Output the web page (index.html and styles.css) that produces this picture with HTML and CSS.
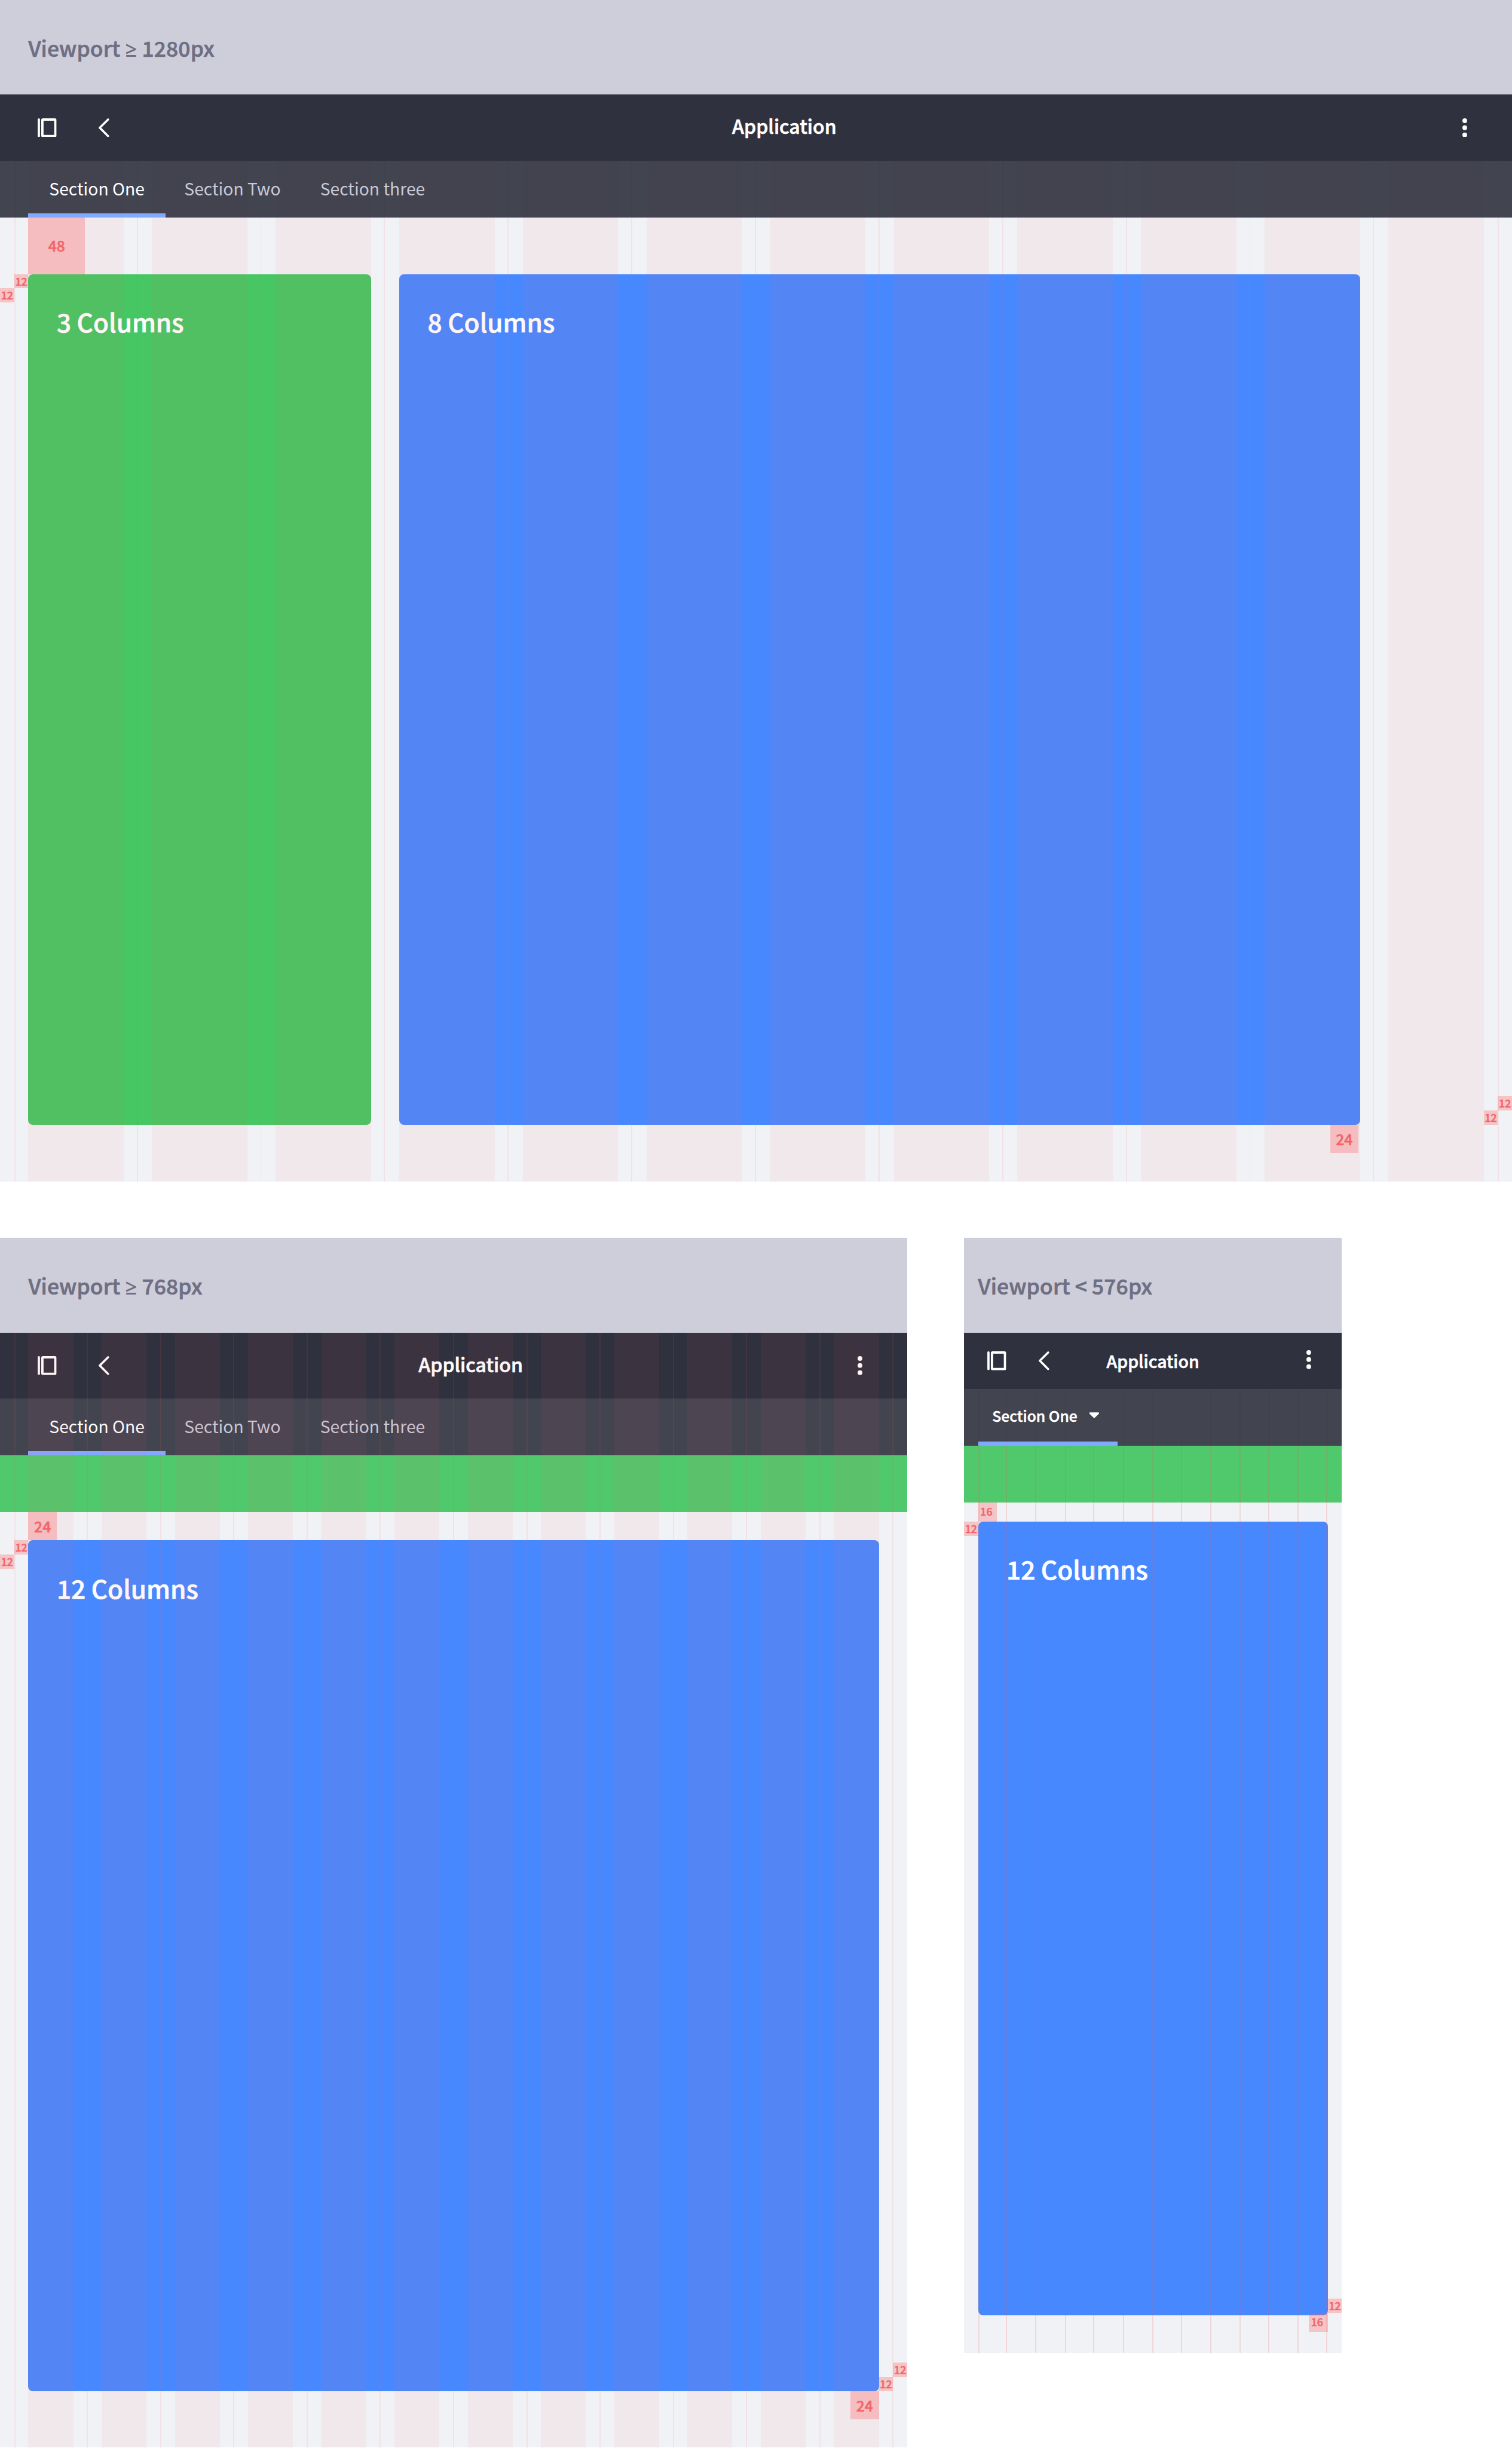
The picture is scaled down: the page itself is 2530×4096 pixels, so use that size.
FILE: index.html
```html
<!DOCTYPE html>
<html lang="en">
<head>
<meta charset="utf-8">
<title>Responsive grid</title>
<link rel="stylesheet" href="styles.css">
</head>
<body>
<svg width="0" height="0" class="defs" aria-hidden="true">
  <symbol id="i-panel" viewBox="0 0 32 32"><path d="M2 2v28" fill="none" stroke="#fff" stroke-width="3.8" stroke-linecap="round"/><rect x="8" y="2" width="22" height="28" rx="1" fill="none" stroke="#fff" stroke-width="4"/></symbol>
  <symbol id="i-back" viewBox="0 0 20 32"><path d="M17 2L3 16L17 30" fill="none" stroke="#fff" stroke-width="3.6" stroke-linecap="round" stroke-linejoin="round"/></symbol>
  <symbol id="i-more" viewBox="0 0 8 32"><circle cx="4" cy="4" r="4" fill="#fff"/><circle cx="4" cy="16" r="4" fill="#fff"/><circle cx="4" cy="28" r="4" fill="#fff"/></symbol>
</svg>
<main class="board">
  <section class="viewport large">
    <h2 class="label">Viewport <span class="op">≥</span> 1280px</h2>
    <div class="screen">
      <div class="guides"><i></i><i></i><i></i><i></i><i></i><i></i><i></i><i></i><i></i><i></i><i></i><i></i></div>
      <header class="nav">
        <svg class="panel"><use href="#i-panel"/></svg><svg class="back"><use href="#i-back"/></svg>
        <h1 class="title">Application</h1>
        <svg class="more"><use href="#i-more"/></svg>
      </header>
      <nav class="tabs"><a class="tab active">Section One</a><a class="tab two">Section Two</a><a class="tab">Section three</a></nav>
      <div class="body">
        <article class="card green"><h3>3 Columns</h3><b class="s m12 in-top">12</b><b class="s m12 out-top">12</b><b class="s m48 above">48</b></article>
        <article class="card blue"><h3>8 Columns</h3><b class="s m24 below">24</b></article>
      </div>
      <b class="s m12 edge-a">12</b><b class="s m12 edge-b">12</b>
    </div>
  </section>
  <div class="pair">
    <section class="viewport medium">
      <h2 class="label">Viewport <span class="op">≥</span> 768px</h2>
      <div class="screen">
        <header class="nav">
          <svg class="panel"><use href="#i-panel"/></svg><svg class="back"><use href="#i-back"/></svg>
          <h1 class="title">Application</h1>
          <svg class="more"><use href="#i-more"/></svg>
        </header>
        <nav class="tabs"><a class="tab active">Section One</a><a class="tab two">Section Two</a><a class="tab">Section three</a></nav>
        <div class="band"></div>
        <div class="body">
          <article class="card blue"><h3>12 Columns</h3><b class="s m12 in-top">12</b><b class="s m12 out-top">12</b><b class="s m24 above">24</b><b class="s m12 in-bottom">12</b><b class="s m12 out-bottom">12</b><b class="s m24 below">24</b></article>
        </div>
        <div class="guides"><i></i><i></i><i></i><i></i><i></i><i></i><i></i><i></i><i></i><i></i><i></i><i></i></div>
      </div>
    </section>
    <section class="viewport small">
      <h2 class="label">Viewport &lt; 576px</h2>
      <div class="screen">
        <header class="nav">
          <svg class="panel"><use href="#i-panel"/></svg><svg class="back"><use href="#i-back"/></svg>
          <h1 class="title">Application</h1>
          <svg class="more"><use href="#i-more"/></svg>
        </header>
        <nav class="tabs"><a class="tab active">Section One<svg class="caret" viewBox="0 0 20 12"><path d="M3 2.5H17L10 9.5Z" fill="#fff" stroke="#fff" stroke-width="2.6" stroke-linejoin="round"/></svg></a></nav>
        <div class="band"></div>
        <div class="body">
          <article class="card blue"><h3>12 Columns</h3><b class="s m12 in-top">12</b><b class="s m16 above">16</b><b class="s m12 in-bottom">12</b><b class="s m16 below">16</b></article>
        </div>
        <div class="guides"><i></i><i></i><i></i><i></i><i></i><i></i><i></i><i></i><i></i><i></i><i></i><i></i></div>
      </div>
    </section>
  </div>
</main>
</body>
</html>
```
FILE: styles.css
```css
/* 1rem is ten design pixels at the board's scale */
html { font-size: 9.8828125px; }
* { box-sizing: border-box; }
body { margin: 0; background: #fff; overflow: hidden; font-family: "Noto Sans CJK SC", "Noto Sans", sans-serif; }
h1, h2, h3 { margin: 0; font-weight: 500; white-space: nowrap; -webkit-text-stroke: .07rem currentColor; }
svg { display: block; flex: none; }
.defs { position: absolute; }
.board { width: 256rem; height: 414.4rem; display: flex; flex-direction: column; gap: 9.6rem; }
.pair { display: flex; gap: 9.6rem; align-items: flex-start; }
.viewport { display: flex; flex-direction: column; }
.large { width: 256rem; height: 200rem; }
.medium { width: 153.6rem; height: 204.8rem; }
.small { width: 64rem; height: 188.8rem; }
.label { height: 16rem; padding: 0 4.8rem; background: #cecdda; color: #6e6f82; font-size: 3.58rem; line-height: 16.2rem; letter-spacing: .012rem; }
.small .label { padding: 0 2.4rem; }
.op { font-family: "Open Sans", "Noto Sans", sans-serif; font-weight: 600; font-size: 3.5rem; line-height: 1; -webkit-text-stroke: 0; }
.screen { position: relative; flex: 1; display: flex; flex-direction: column; background: #f0f2f5; }

.nav { height: 11.2rem; padding: 0 7.6rem 0 6.4rem; display: flex; align-items: center; background: #2f313e; color: #fff; position: relative; }
.panel { width: 3.2rem; height: 3.2rem; }
.back { width: 2rem; height: 3.2rem; margin-left: 7rem; }
.more { width: .8rem; height: 3.2rem; margin-left: auto; }
.title { position: absolute; left: 9.6rem; right: 0; top: 0; text-align: center; font-size: 3.24rem; line-height: 10.6rem; }
.medium .title { left: 5.8rem; }
.small .title { left: 0; font-size: 2.88rem; line-height: 9.5rem; }
.small .nav { height: 9.6rem; padding: 0 5.2rem 0 4rem; }
.small .back { margin-left: 5.4rem; }
.small .more { margin-bottom: .4rem; }

.tabs { height: 9.6rem; padding-left: 4.8rem; display: flex; background: rgba(47, 49, 62, .9); position: relative; color: #c9c9d8; font-size: 2.86rem; line-height: 9.4rem; }
.tab { padding: 0 3.1rem; white-space: nowrap; }
.tab.two { padding: 0 3.6rem 0 3.2rem; }
.tab.active { width: 23.2rem; padding: 0; text-align: center; color: #fff; border-bottom: .8rem solid #80aaff; }
.small .tabs { padding-left: 2.4rem; font-weight: 500; font-size: 2.5rem; line-height: 9.2rem; -webkit-text-stroke: .05rem currentColor; }
.small .tab.active { width: 23.6rem; padding-left: 2.4rem; display: flex; align-items: center; gap: 1.8rem; }
.caret { width: 2rem; height: 1.2rem; }

.band { height: 9.6rem; background: #50c86c; }
.body { flex: 1; display: flex; gap: 4.8rem; padding: 9.6rem 4.8rem; position: relative; }
.medium .body { padding: 4.8rem 4.8rem 9.6rem; }
.small .body { padding: 3.2rem 2.4rem 6.4rem; }
.card { position: relative; flex: 1; padding: 4.8rem; border-radius: .8rem; color: #fff; }
.card h3 { font-size: 4.29rem; line-height: 6.4rem; }
.large .card { flex: none; }
.large .card.green { width: 58rem; }
.large .card.blue { width: 162.667rem; }
.green { background: #46c764; }
.blue { background: #4888ff; }

/* twelve-column guides laid over the screen */
.guides { position: absolute; inset: 0 2.4rem; display: flex; pointer-events: none; z-index: 1; }
.guides i { flex: 1; position: relative; padding: 0 2.4rem; }
.guides i::before { content: ""; display: block; height: 100%; background: rgba(255, 91, 91, .062); }
.guides i::after, .guides i:first-child { --line: rgba(255, 85, 85, .1); }
.guides i::after { content: ""; position: absolute; top: 0; bottom: 0; right: 0; width: .2rem; background: var(--line); }
.guides i:first-child { box-shadow: inset .2rem 0 0 var(--line); }
.large .guides { top: 11.2rem; }
.large .guides i:last-child::after { right: -.2rem; }
.large .nav, .large .tabs { z-index: 2; }
.medium .guides i::after { right: -.1rem; }
.small .guides { top: 9.6rem; }
.small .guides i { padding: 0; flex: none; width: 5rem; }
.small .guides i:nth-child(3n+1) { width: 4.8rem; }
.small .guides i::before { display: none; }
.small .guides i::after, .small .guides i:first-child { --line: rgba(235, 85, 85, .17); }
.small .guides i::after { right: -.1rem; }
.small .guides i:last-child::after { right: .1rem; }
.small .tabs { z-index: 2; }

/* spacing markers pinned to the cards and the screen edge */
.s { position: absolute; display: block; text-align: center; font-weight: 500; color: #f2666a; -webkit-text-stroke: .06rem currentColor; background: rgba(255, 91, 91, .3); z-index: 3; }
.m12 { width: 2.4rem; height: 2.4rem; font-size: 1.79rem; line-height: 2.3rem; }
.m16 { width: 3.2rem; height: 3.2rem; padding-right: .4rem; font-size: 1.79rem; line-height: 3rem; }
.m24 { width: 4.8rem; height: 4.8rem; font-size: 2.5rem; line-height: 4.8rem; }
.m48 { width: 9.6rem; height: 9.6rem; font-size: 2.5rem; line-height: 9.4rem; }
.above { left: 0; bottom: 100%; }
.below { right: 0; top: 100%; }
.large .below { right: .267rem; }
.in-top { right: 100%; top: 0; }
.out-top { right: calc(100% + 2.4rem); top: 2.4rem; }
.in-bottom { left: 100%; bottom: 0; }
.out-bottom { left: calc(100% + 2.4rem); bottom: 2.4rem; }
.small .in-bottom { bottom: .4rem; }
.small .below { top: calc(100% - .4rem); }
.edge-a { right: 0; bottom: 12rem; }
.edge-b { right: 2.4rem; bottom: 9.6rem; }
```
